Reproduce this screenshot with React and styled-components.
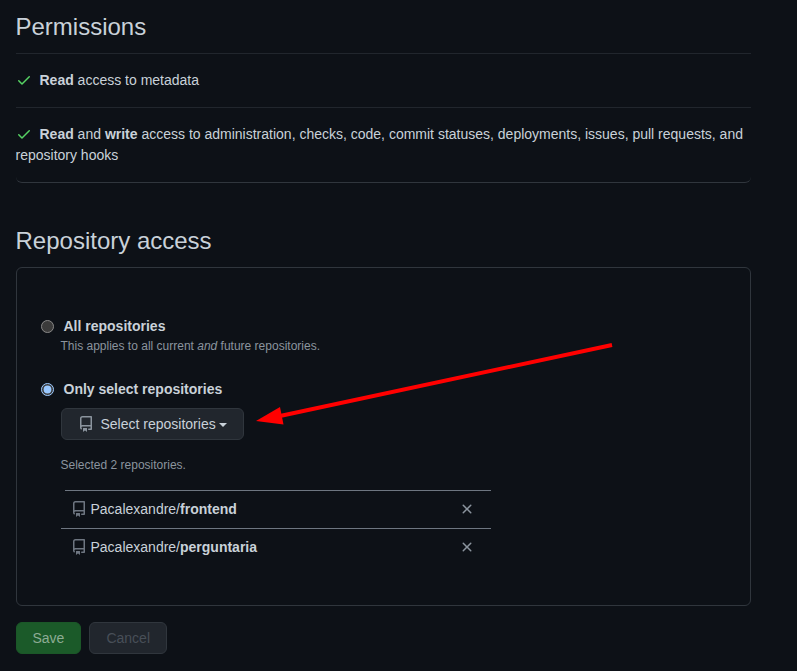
import React, { useState } from "react";
import styled, { createGlobalStyle } from "styled-components";

const GlobalStyle = createGlobalStyle`
  :root { color-scheme: dark; }
  *, *::before, *::after { box-sizing: border-box; }
  body {
    margin: 0;
    background: #0d1117;
    color: #c9d1d9;
    font: 14px/21px "Liberation Sans", Arial, sans-serif;
    overflow: hidden;
  }
`;

const Page = styled.main`
  position: relative;
  width: 797px;
  height: 671px;
  padding: 9px 46px 0 15.5px;
`;

const Heading = styled.h2`
  margin: 0 0 8px;
  font-size: 24px;
  font-weight: 400;
  line-height: 36px;
`;

const PermissionList = styled.ul`
  margin: 0 0 40px;
  padding: 0;
  list-style: none;
`;

const Permission = styled.li`
  padding: 16px 0;
  border-top: 1px solid #21262d;

  &:last-child {
    border-bottom: 1px solid #30363d;
    border-radius: 0 0 6px 6px;
  }
`;

const Icon = styled.svg`
  display: inline-block;
  flex: none;
  width: 16px;
  height: 16px;
  fill: ${(p) => p.$color || "#8b949e"};
  fill-rule: evenodd;
  vertical-align: text-bottom;
`;

const CheckIcon = styled(Icon)`
  margin-right: 8px;
`;

const AccessBox = styled.section`
  height: 339px;
  padding: 48px 24px 0;
  border: 1px solid #30363d;
  border-radius: 6px;
`;

const Option = styled.label`
  display: flex;
  align-items: center;
  gap: 10px;
  height: 21px;
  font-weight: 600;
`;

const Radio = styled.input`
  width: 13px;
  height: 13px;
  margin: 0;
`;

const Note = styled.p`
  margin: 0 0 0 20px;
  color: #8b949e;
  font-size: 12px;
  line-height: 18px;
`;

const OptionGroup = styled.div`
  margin-bottom: 24px;
`;

const Button = styled.button`
  display: inline-flex;
  align-items: center;
  height: 32px;
  padding: 0 16px;
  border: 1px solid ${(p) => (p.$primary ? "#1b5728" : "#30363d")};
  border-radius: 6px;
  background: ${(p) => (p.$primary ? "#1b5a29" : "#21262d")};
  color: ${(p) => (p.$primary ? "#8dac94" : "#484f58")};
  font: 500 14px/20px "Liberation Sans", Arial, sans-serif;
  white-space: nowrap;
`;

const SelectButton = styled(Button)`
  width: 183px;
  margin: 8px 0 0 20px;
  color: #c9d1d9;
`;

const SelectLabel = styled.span`
  margin-left: 7px;
`;

const Caret = styled.span`
  margin-left: 3px;
  margin-top: 2px;
  border: 4px solid transparent;
  border-top-color: currentColor;
  border-bottom: 0;
`;

const SelectionNote = styled(Note)`
  margin-top: 16px;
`;

const RepoList = styled.ul`
  width: 430px;
  margin: 16px 0 0 20px;
  padding: 0;
  list-style: none;
`;

const Repo = styled.li`
  display: flex;
  align-items: flex-start;
  height: 38px;
  padding: 8px 16px 0 10px;
  border-top: 1px solid #6e7681;

  &:first-child {
    padding-top: 9px;
    border-top: 0;
    background: linear-gradient(#6e7681, #6e7681) 4px 0 / 100% 1px no-repeat;
  }

  > svg, > button {
    margin-top: 2px;
  }
`;

const RepoName = styled.span`
  flex: 1;
  margin-left: 4px;
`;

const RemoveButton = styled.button`
  display: flex;
  padding: 0;
  border: 0;
  background: none;
`;

const Actions = styled.div`
  display: flex;
  gap: 8px;
  margin-top: 16px;
`;

const Arrow = styled.svg`
  position: absolute;
  left: 250px;
  top: 335px;
  width: 370px;
  height: 100px;
  pointer-events: none;
`;

const repoPath =
  "M2 2.5A2.5 2.5 0 014.5 0h8.75a.75.75 0 01.75.75v12.5a.75.75 0 01-.75.75h-2.5a.75.75 0 110-1.5h1.75v-2h-8a1 1 0 00-.714 1.7.75.75 0 01-1.072 1.05A2.495 2.495 0 012 11.5v-9zm10.5-1V9h-8c-.356 0-.694.074-1 .208V2.5a1 1 0 011-1h8zM5 12.25v3.25a.25.25 0 00.4.2l1.45-1.087a.25.25 0 01.3 0L8.6 15.7a.25.25 0 00.4-.2v-3.25a.25.25 0 00-.25-.25h-3.5a.25.25 0 00-.25.25z";
const checkPath =
  "M13.78 4.22a.75.75 0 010 1.06l-7.25 7.25a.75.75 0 01-1.06 0L2.22 9.28a.75.75 0 011.06-1.06L6 10.94l6.72-6.72a.75.75 0 011.06 0z";
const closePath =
  "M3.72 3.72a.75.75 0 011.06 0L8 6.94l3.22-3.22a.75.75 0 111.06 1.06L9.06 8l3.22 3.22a.75.75 0 11-1.06 1.06L8 9.06l-3.22 3.22a.75.75 0 01-1.06-1.06L6.94 8 3.72 4.78a.75.75 0 010-1.06z";

const Check = () => (
  <CheckIcon viewBox="0 0 16 16" $color="#56d364">
    <path d={checkPath} />
  </CheckIcon>
);

const repositories = ["frontend", "perguntaria"];

export default function App() {
  const [access, setAccess] = useState("selected");
  return (
    <>
      <GlobalStyle />
      <Page>
        <Heading>Permissions</Heading>
        <PermissionList>
          <Permission>
            <Check />
            <strong>Read</strong> access to metadata
          </Permission>
          <Permission>
            <Check />
            <strong>Read</strong> and <strong>write</strong> access to administration, checks, code, commit
            statuses, deployments, issues, pull requests, and repository hooks
          </Permission>
        </PermissionList>

        <Heading>Repository access</Heading>
        <AccessBox>
          <OptionGroup>
            <Option>
              <Radio type="radio" name="access" checked={access === "all"} onChange={() => setAccess("all")} />
              All repositories
            </Option>
            <Note>
              This applies to all current <em>and</em> future repositories.
            </Note>
          </OptionGroup>
          <Option>
            <Radio
              type="radio"
              name="access"
              checked={access === "selected"}
              onChange={() => setAccess("selected")}
            />
            Only select repositories
          </Option>
          <SelectButton type="button">
            <Icon viewBox="0 0 16 16">
              <path d={repoPath} />
            </Icon>
            <SelectLabel>Select repositories</SelectLabel>
            <Caret />
          </SelectButton>
          <SelectionNote>Selected 2 repositories.</SelectionNote>
          <RepoList>
            {repositories.map((name) => (
              <Repo key={name}>
                <Icon viewBox="0 0 16 16" $color="#6e7681">
                  <path d={repoPath} />
                </Icon>
                <RepoName>
                  Pacalexandre/<strong>{name}</strong>
                </RepoName>
                <RemoveButton type="button" aria-label={`Remove ${name}`}>
                  <Icon viewBox="0 0 16 16">
                    <path d={closePath} />
                  </Icon>
                </RemoveButton>
              </Repo>
            ))}
          </RepoList>
        </AccessBox>

        <Actions>
          <Button type="button" $primary>
            Save
          </Button>
          <Button type="button">Cancel</Button>
        </Actions>

        <Arrow viewBox="250 335 370 100">
          <path d="M612 345L280 416" stroke="#f00" strokeWidth="4" />
          <path d="M256 421L280 407L283.500 424.500Z" fill="#f00" />
        </Arrow>
      </Page>
    </>
  );
}
